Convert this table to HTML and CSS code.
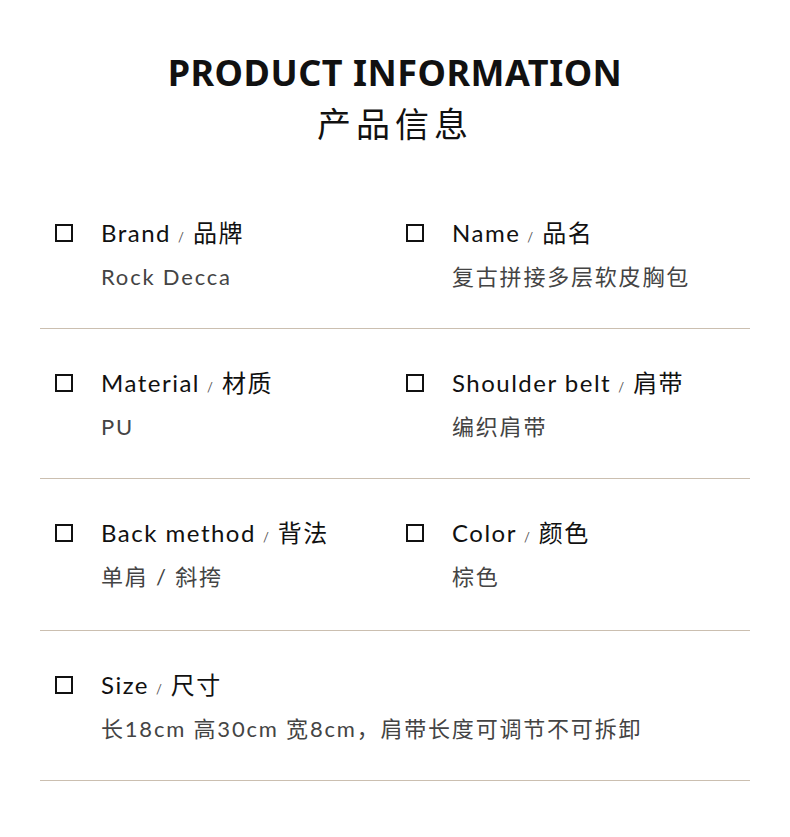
FILE: index.html
```html
<!DOCTYPE html>
<html lang="zh">
<head>
<meta charset="utf-8">
<title>Product Information</title>
<link rel="stylesheet" href="styles.css">
</head>
<body>
<div class="page">
  <header class="header">
    <h1 class="title-en">PRODUCT INFORMATION</h1>
    <h2 class="title-cn">产品信息</h2>
  </header>
  <section class="rows">
    <div class="row">
      <div class="item">
        <span class="box"></span>
        <div class="text">
          <div class="label">Brand<span class="slash">/</span>品牌</div>
          <div class="value">Rock Decca</div>
        </div>
      </div>
      <div class="item">
        <span class="box"></span>
        <div class="text">
          <div class="label">Name<span class="slash">/</span>品名</div>
          <div class="value">复古拼接多层软皮胸包</div>
        </div>
      </div>
    </div>
    <div class="row">
      <div class="item">
        <span class="box"></span>
        <div class="text">
          <div class="label">Material<span class="slash">/</span>材质</div>
          <div class="value">PU</div>
        </div>
      </div>
      <div class="item">
        <span class="box"></span>
        <div class="text">
          <div class="label">Shoulder belt<span class="slash">/</span>肩带</div>
          <div class="value">编织肩带</div>
        </div>
      </div>
    </div>
    <div class="row">
      <div class="item">
        <span class="box"></span>
        <div class="text">
          <div class="label">Back method<span class="slash">/</span>背法</div>
          <div class="value">单肩 / 斜挎</div>
        </div>
      </div>
      <div class="item">
        <span class="box"></span>
        <div class="text">
          <div class="label">Color<span class="slash">/</span>颜色</div>
          <div class="value">棕色</div>
        </div>
      </div>
    </div>
    <div class="row single">
      <div class="item">
        <span class="box"></span>
        <div class="text">
          <div class="label">Size<span class="slash">/</span>尺寸</div>
          <div class="value">长18cm 高30cm 宽8cm，肩带长度可调节不可拆卸</div>
        </div>
      </div>
    </div>
  </section>
</div>
</body>
</html>
```

FILE: styles.css
```css
* { box-sizing: border-box; }
html, body { margin: 0; padding: 0; background: #fff; }
body {
  font-family: "Lato", "Noto Sans CJK SC", sans-serif;
  color: #111;
}
.page {
  width: 790px;
  padding: 0 40px;
}
.header {
  height: 179px;
  padding-top: 49px;
  text-align: center;
}
.title-en {
  margin: 0;
  font-family: "Noto Sans", "Noto Sans CJK SC", sans-serif;
  font-weight: 700;
  font-size: 36px;
  line-height: 48px;
  letter-spacing: 0.5px;
  color: #111;
}
.title-cn {
  margin: 0;
  font-family: "Noto Sans CJK SC", sans-serif;
  font-weight: 400;
  font-size: 34px;
  line-height: 52px;
  letter-spacing: 5px;
  color: #111;
}
.row {
  height: 150px;
  display: grid;
  grid-template-columns: 351px 1fr;
  padding: 32px 0 0 15px;
  border-bottom: 1px solid #cbbfb0;
}
.row:nth-child(3) { height: 152px; }
.row.single { grid-template-columns: 1fr; }
.item {
  display: flex;
  align-items: flex-start;
}
.box {
  flex: none;
  width: 18px;
  height: 18px;
  border: 2px solid #111;
  margin-top: 13px;
  margin-right: 28px;
}
.label {
  font-size: 24px;
  line-height: 44px;
  letter-spacing: 1.5px;
  color: #111;
  white-space: nowrap;
}
.slash {
  display: inline-block;
  font-size: 13px;
  letter-spacing: 0;
  color: #555;
  margin: 0 9px 0 7px;
}
.value {
  margin-top: -4px;
  font-size: 22px;
  line-height: 44px;
  color: #444;
  letter-spacing: 1.8px;
  white-space: nowrap;
}
```
